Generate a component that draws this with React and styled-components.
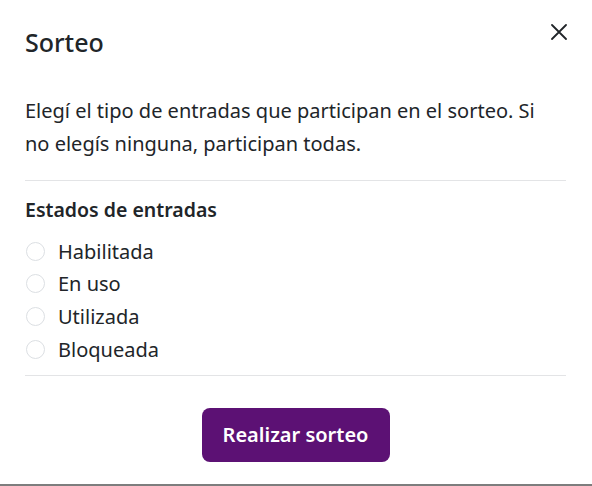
import React from "react";
import styled, { createGlobalStyle } from "styled-components";

const Global = createGlobalStyle`
  html, body { margin: 0; padding: 0; background: #fff; }
  body { font-family: "Noto Sans", "Open Sans", sans-serif; color: #212529; }
  * { box-sizing: border-box; }
`;

const Modal = styled.div`
  width: 592px;
  height: 486px;
  background: #fff;
  border-bottom: 2px solid #7d7d7d;
  display: flex;
  flex-direction: column;
  padding: 0 26px 0 25px;
`;

const Header = styled.div`
  display: flex;
  justify-content: space-between;
  align-items: flex-start;
  padding-top: 26px;
`;

const Title = styled.h2`
  margin: 0;
  font-size: 25px;
  line-height: 32px;
  font-weight: 500;
`;

const Close = styled.button`
  border: 0;
  background: transparent;
  padding: 0;
  margin: -2px -1px 0 0;
  width: 16px;
  height: 16px;
  display: flex;
  cursor: pointer;
`;

const Body = styled.p`
  margin: 36px 0 0;
  font-size: 20px;
  line-height: 33.4px;
  max-width: 525px;
`;

const Divider = styled.hr`
  border: 0;
  border-top: 1px solid #e3e4e6;
  margin: ${(p) => p.$top}px 0 0;
  width: 100%;
`;

const Section = styled.div`
  display: flex;
  flex-direction: column;
  padding-top: 15px;
`;

const SectionTitle = styled.h3`
  margin: 0 0 11px;
  font-size: 19.5px;
  line-height: 28px;
  font-weight: 600;
`;

const Option = styled.label`
  display: flex;
  align-items: center;
  gap: 13px;
  height: 32.7px;
  font-size: 20px;
  cursor: pointer;
`;

const Radio = styled.span`
  width: 19px;
  height: 19px;
  margin-left: 1px;
  border-radius: 50%;
  border: 1px solid #dcdfe3;
  background: #fff;
  flex: none;
`;

const Footer = styled.div`
  display: flex;
  justify-content: center;
  padding-top: 32px;
`;

const Button = styled.button`
  width: 188px;
  height: 54px;
  border: 0;
  border-radius: 8px;
  background: #5c1174;
  color: #fff;
  font-family: "Noto Sans", sans-serif;
  font-size: 20px;
  font-weight: 600;
  cursor: pointer;
`;

const options = ["Habilitada", "En uso", "Utilizada", "Bloqueada"];

export default function App() {
  return (
    <>
      <Global />
      <Modal>
        <Header>
          <Title>Sorteo</Title>
          <Close aria-label="Cerrar">
            <svg width="16" height="16" viewBox="0 0 16 16">
              <path d="M1 1L15 15M15 1L1 15" stroke="#212529" strokeWidth="1.8" strokeLinecap="round" />
            </svg>
          </Close>
        </Header>
        <Body>
          Elegí el tipo de entradas que participan en el sorteo. Si no elegís ninguna, participan todas.
        </Body>
        <Divider $top={19} />
        <Section>
          <SectionTitle>Estados de entradas</SectionTitle>
          {options.map((o) => (
            <Option key={o}>
              <Radio />
              {o}
            </Option>
          ))}
        </Section>
        <Divider $top={9} />
        <Footer>
          <Button>Realizar sorteo</Button>
        </Footer>
      </Modal>
    </>
  );
}
